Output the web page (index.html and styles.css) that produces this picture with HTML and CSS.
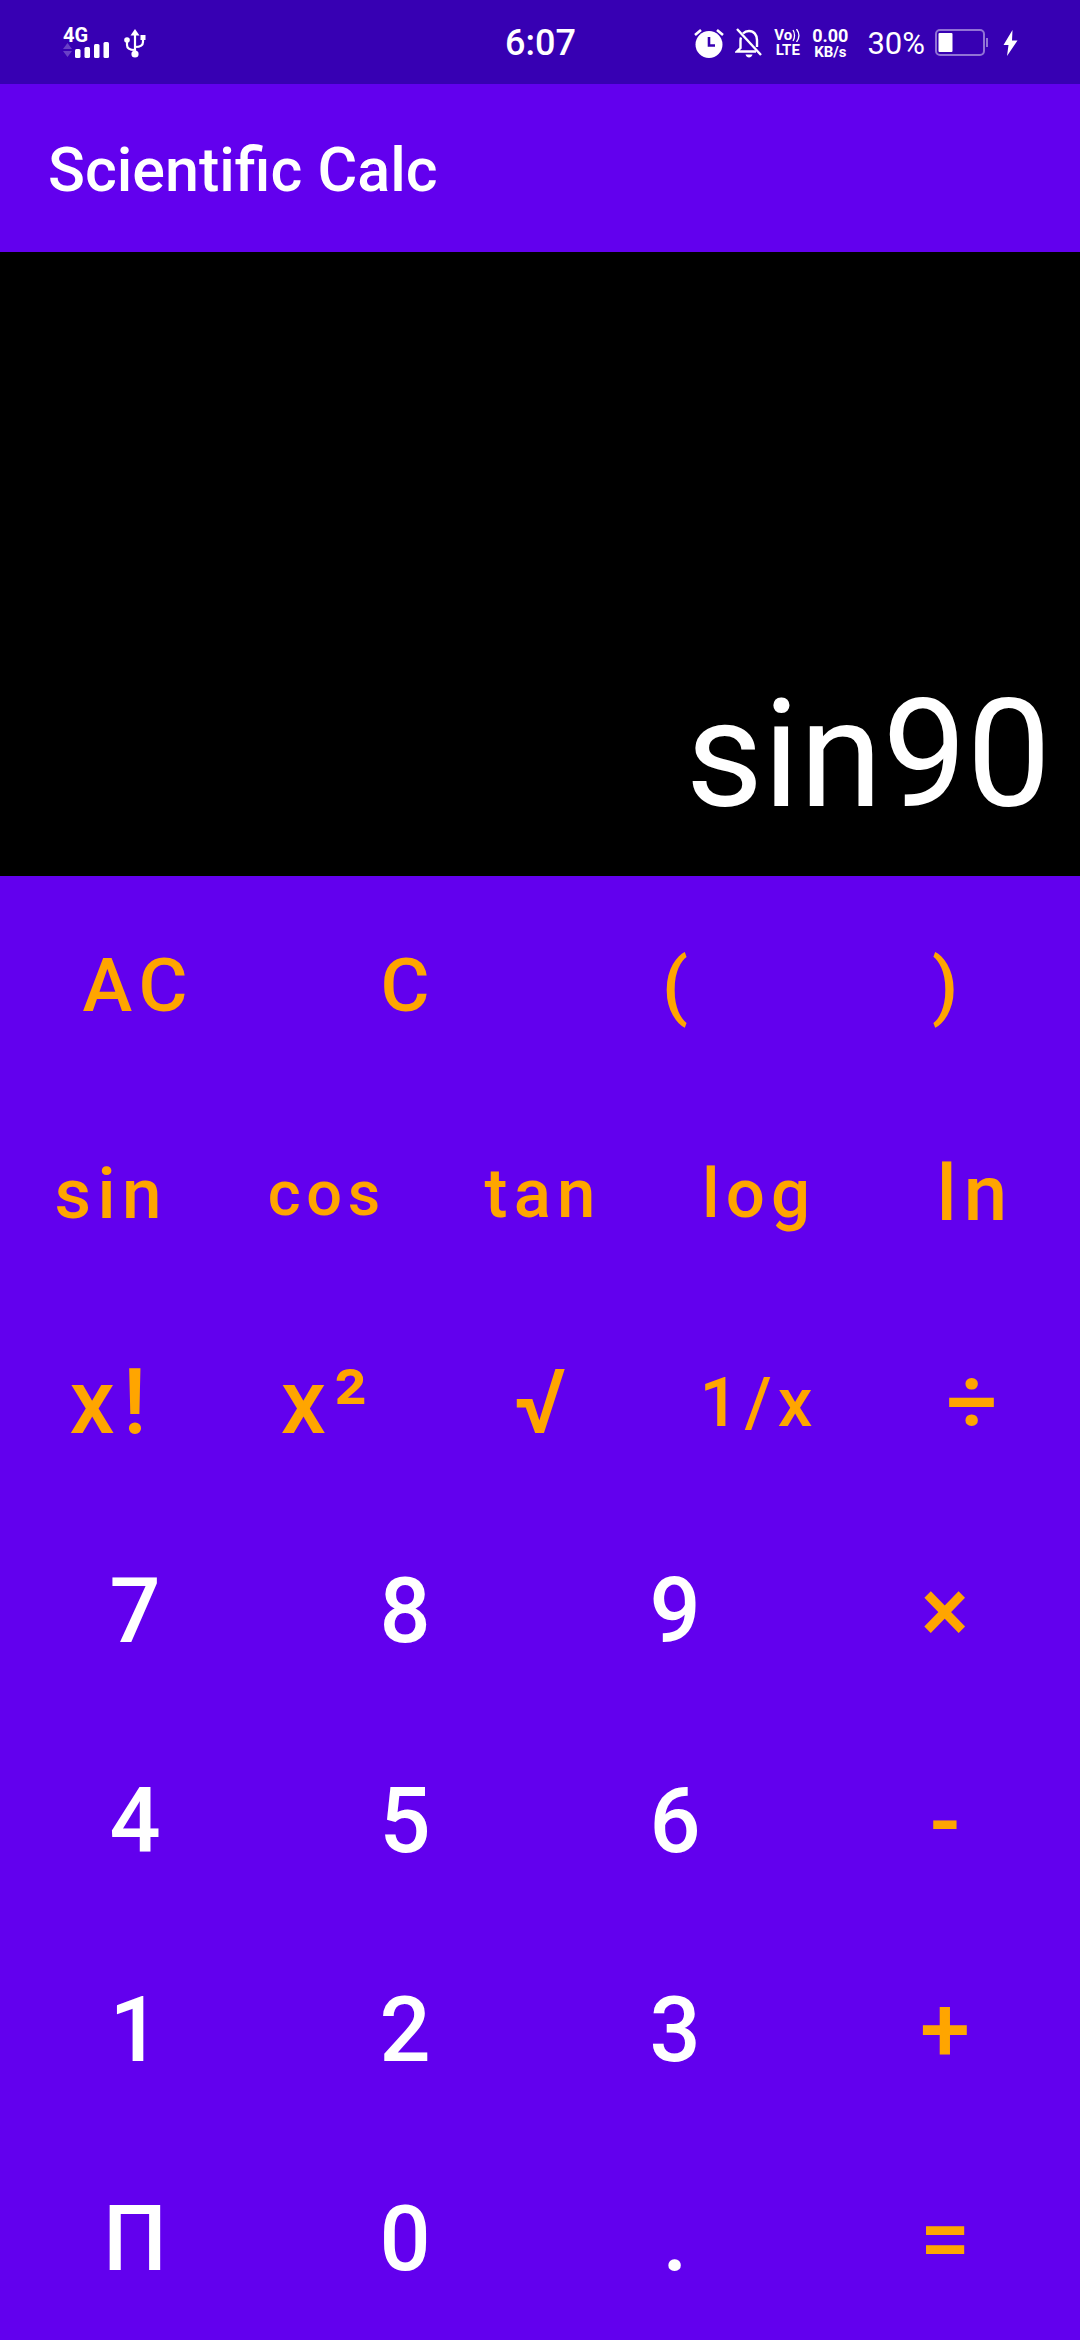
FILE: index.html
```html
<!DOCTYPE html>
<html lang="en">
<head>
  <meta charset="UTF-8">
  <title>Scientific Calc</title>
  <link rel="stylesheet" href="styles.css">
</head>
<body>

  <div class="status-bar">
    <div class="status-left">
      <div class="signal">
        <span class="net-type">4G</span>
        <svg width="46" height="16" viewBox="0 0 46 16">
          <path d="M4.500 1l4.500 6h-9z M0 9h9l-4.500 6z" fill="#fff" fill-opacity="0.25"/>
          <rect x="12" y="7" width="5.500" height="9" rx="1.500" fill="#fff"/>
          <rect x="21.500" y="5" width="5.500" height="11" rx="1.500" fill="#fff"/>
          <rect x="31" y="2" width="5.500" height="14" rx="1.500" fill="#fff"/>
          <rect x="40.500" y="0" width="5.500" height="16" rx="1.500" fill="#fff"/>
        </svg>
      </div>
      <svg class="icon-usb" width="22" height="30" viewBox="0 0 22 30">
        <path d="M11 1l4.500 6.500h-9z" fill="#fff"/>
        <path d="M11 6v20M11 22c-6 0-8-2-8-5v-4M11 19c6 0 8-2 8-5v-4" stroke="#fff" stroke-width="2.200" fill="none"/>
        <circle cx="3" cy="12" r="2.800" fill="#fff"/>
        <rect x="16.500" y="7" width="5" height="5" fill="#fff"/>
        <circle cx="11" cy="26" r="3.600" fill="#fff"/>
      </svg>
    </div>
    <div class="status-time">6:07</div>
    <div class="status-right">
      <svg class="icon-alarm" width="30" height="30" viewBox="0 0 30 30">
        <circle cx="15" cy="16.500" r="13.500" fill="#fff"/>
        <path d="M15 9v8.500h6" stroke="#3700b3" stroke-width="2.600" fill="none"/>
        <path d="M1 7l6-5M29 7l-6-5" stroke="#fff" stroke-width="2.600"/>
      </svg>
      <svg class="icon-bell" width="28" height="30" viewBox="0 0 28 30">
        <path d="M8 5.500c1.500-1.500 3.500-2.500 6-2.500 5 0 8 4 8 9v7M6 9.500c-.5 1-.5 2-.5 3v7.500L2 23.500h19" stroke="#fff" stroke-width="2.400" fill="none"/>
        <path d="M2 1l24 26" stroke="#fff" stroke-width="2.400"/>
        <path d="M10.500 26.500h7c-.5 2-2 3-3.500 3s-3-1-3.500-3z" fill="#fff"/>
      </svg>
      <div class="volte"><span class="volte-top">Vo<svg width="9" height="13" viewBox="0 0 9 13"><path d="M1 1c2 3 2 8 0 11M4.500 0c3 4 3 9 0 13" stroke="#fff" stroke-width="1.300" fill="none"/></svg></span><span>LTE</span></div>
      <div class="speed"><span class="speed-num">0.00</span><span>KB/s</span></div>
      <div class="battery-pct">30%</div>
      <svg class="icon-battery" width="54" height="28" viewBox="0 0 54 28">
        <rect x="1" y="1" width="48" height="25" rx="4" stroke="#fff" stroke-opacity="0.45" stroke-width="2" fill="none"/>
        <rect x="3.500" y="4" width="14" height="19" rx="1" fill="#fff"/>
        <rect x="51" y="9" width="2" height="9" fill="#fff" fill-opacity="0.45"/>
      </svg>
      <svg class="icon-bolt" width="15" height="26" viewBox="0 0 15 26">
        <path d="M9.500 0L0.500 15h5l-1.500 11 10.500-15.500h-5.500z" fill="#fff"/>
      </svg>
    </div>
  </div>

  <div class="app-bar">Scientific Calc</div>

  <div class="display">sin90</div>

  <div class="keypad">
    <div class="key-row">
      <button class="key op key-ac">AC</button>
      <button class="key op key-ac">C</button>
      <button class="key op key-ac">(</button>
      <button class="key op key-ac">)</button>
    </div>
    <div class="key-row">
      <button class="key op key-fn sin">sin</button>
      <button class="key op key-fn cos">cos</button>
      <button class="key op key-fn">tan</button>
      <button class="key op key-fn">log</button>
      <button class="key op key-fn ln">ln</button>
    </div>
    <div class="key-row">
      <button class="key op key-big">x!</button>
      <button class="key op key-big">x²</button>
      <button class="key op key-big">√</button>
      <button class="key op key-fn">1/x</button>
      <button class="key op key-big">÷</button>
    </div>
    <div class="key-row">
      <button class="key num">7</button>
      <button class="key num">8</button>
      <button class="key num">9</button>
      <button class="key op key-big">×</button>
    </div>
    <div class="key-row">
      <button class="key num">4</button>
      <button class="key num">5</button>
      <button class="key num">6</button>
      <button class="key op key-big">-</button>
    </div>
    <div class="key-row">
      <button class="key num">1</button>
      <button class="key num">2</button>
      <button class="key num">3</button>
      <button class="key op key-big">+</button>
    </div>
    <div class="key-row">
      <button class="key num">Π</button>
      <button class="key num">0</button>
      <button class="key num">.</button>
      <button class="key op key-big">=</button>
    </div>
  </div>

</body>
</html>
```

FILE: styles.css
```css
* {
  box-sizing: border-box;
}

body {
  margin: 0;
  width: 1080px;
  height: 2340px;
  overflow: hidden;
  font-family: Roboto, sans-serif;
  background: #6200ee;
  color: white;
}

.status-bar {
  height: 84px;
  background: #3700b3;
  display: grid;
  grid-template-columns: 1fr auto 1fr;
  align-items: center;
  padding: 2px 62px 0 63px;
}

.status-left {
  display: flex;
  align-items: center;
  gap: 15px;
}

.signal {
  display: flex;
  flex-direction: column;
}

.signal svg {
  display: block;
}

.net-type {
  font-size: 20px;
  line-height: 14px;
  font-weight: 700;
}

.status-time {
  font-size: 36px;
  font-weight: 500;
}

.status-right {
  display: flex;
  align-items: center;
  justify-content: flex-end;
  font-weight: 700;
}

.icon-bell {
  margin-left: 11px;
}

.volte, .speed {
  display: flex;
  flex-direction: column;
  align-items: center;
  font-size: 15px;
  line-height: 15px;
  margin-left: 11px;
}

.volte-top {
  display: flex;
  align-items: center;
}

.speed-num {
  font-size: 18px;
  line-height: 18px;
}

.battery-pct {
  font-size: 31px;
  font-weight: 400;
  margin-left: 19px;
}

.icon-battery {
  margin-left: 10px;
}

.icon-bolt {
  margin-left: 14px;
}

.app-bar {
  height: 168px;
  padding: 3px 0 0 48px;
  display: flex;
  align-items: center;
  font-size: 61px;
  font-weight: 500;
}

.display {
  height: 624px;
  background: black;
  padding: 0 29px 33px 0;
  display: flex;
  align-items: flex-end;
  justify-content: flex-end;
  font-size: 150px;
  line-height: 1.17;
}

.keypad {
  height: 1464px;
  display: flex;
  flex-direction: column;
}

.key-row {
  flex: 1;
  display: flex;
}

.key {
  flex: 1;
  background: none;
  border: none;
  padding: 8px 0 0;
  font-family: Roboto, sans-serif;
  font-weight: 500;
  letter-spacing: 0.0892em;
  text-indent: 0.0892em;
  color: white;
}

.num {
  font-size: 90px;
}

.op {
  color: orange;
}

.key-ac {
  font-size: 75px;
}

.key-fn {
  font-size: 69px;
}

.key-fn.sin {
  font-size: 71px;
}

.key-fn.cos {
  font-size: 63px;
}

.key-fn.ln {
  font-size: 78px;
}

.key-big {
  font-size: 90px;
}
```
